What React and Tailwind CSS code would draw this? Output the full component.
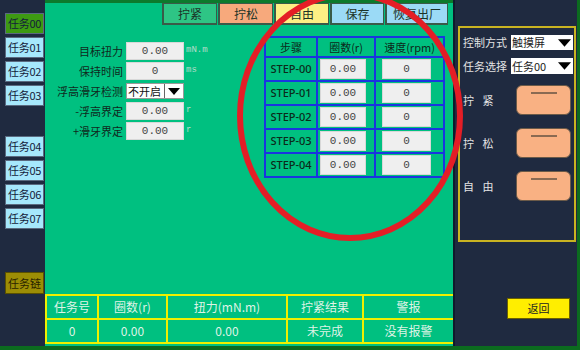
import React from "react";

const tasks1 = ["任务01", "任务02", "任务03"];
const tasks2 = ["任务04", "任务05", "任务06", "任务07"];
const topButtons = [
  { label: "拧紧", cls: "w-[55px] bg-[#2ec585]" },
  { label: "拧松", cls: "w-[55px] bg-[#f7a97c]" },
  { label: "自由", cls: "w-[55px] bg-[#fcef84]" },
  { label: "保存", cls: "w-[54px] bg-[#9bdaf6]" },
  { label: "恢复出厂", cls: "w-[63px] bg-[#9bdaf6]" },
];
const formRows = [
  { label: "目标扭力", value: "0.00", unit: "mN.m" },
  { label: "保持时间", value: "0", unit: "ms" },
  { label: "浮高滑牙检测", select: "不开启" },
  { label: "-浮高界定", value: "0.00", unit: "r" },
  { label: "+滑牙界定", value: "0.00", unit: "r" },
];
const steps = ["STEP-00", "STEP-01", "STEP-02", "STEP-03", "STEP-04"];

function TaskBtn({ label, active }) {
  return (
    <div
      className={`w-[39px] h-[21px] flex items-center justify-center whitespace-nowrap overflow-hidden text-[11px] tracking-[-0.3px] text-[#14213a] border border-[#5a6a80] ${
        active ? "bg-[#3d9a12]" : "bg-[#a6e8fc]"
      }`}
    >
      {label}
    </div>
  );
}

function Arrow() {
  return (
    <span className="w-[19px] h-full flex items-center justify-center border-l border-[#666] bg-white">
      <svg width="12" height="7" viewBox="0 0 12 7">
        <path d="M0 0 L12 0 L6 7 Z" fill="#000" />
      </svg>
    </span>
  );
}

function Field({ value, w = "w-[58px]" }) {
  return (
    <div
      className={`${w} h-[18px] bg-[#efefef] border border-[#d8d8d8] flex items-center justify-center text-[11px] text-[#444] font-['Liberation_Mono',monospace]`}
    >
      {value}
    </div>
  );
}

function OrangeBtn() {
  return (
    <div className="w-[55px] h-[30px] rounded-[6px] bg-[#f9b183] border border-[#6b5a48] flex justify-center pt-[6px]">
      <div className="w-[26px] h-[2px] bg-[#8a6a52]" />
    </div>
  );
}

export default function App() {
  return (
    <div className="relative w-[580px] h-[350px] bg-[#0b6b1f] overflow-hidden font-['Noto_Sans_CJK_SC',sans-serif]">
      <div className="flex h-[346px] pr-[3px]">
        {/* left task list */}
        <aside className="w-[45px] bg-[#1f2a40] flex flex-col pl-[5px] pt-[13px]">
          <TaskBtn label="任务00" active />
          <div className="flex flex-col gap-[3px] mt-[3px]">
            {tasks1.map((t) => (
              <TaskBtn key={t} label={t} />
            ))}
          </div>
          <div className="flex flex-col gap-[3px] mt-[30px]">
            {tasks2.map((t) => (
              <TaskBtn key={t} label={t} />
            ))}
          </div>
          <div className="mt-[43px] w-[39px] h-[22px] flex items-center justify-center whitespace-nowrap bg-[#9c8d05] border border-[#5a5000] text-[11px] text-[#2a2400]">
            任务链
          </div>
        </aside>

        {/* main area */}
        <main className="w-[408px] bg-[#00c080] border-t-[3px] border-[#0c7a2c] flex flex-col">
          <div className="flex justify-end gap-[1px] pr-[5px]">
            {topButtons.map((b) => (
              <div
                key={b.label}
                className={`${b.cls} h-[22px] flex items-center justify-center text-[12px] text-[#1b3327] border border-[#3a5a48] border-b-2 border-l-2`}
              >
                {b.label}
              </div>
            ))}
          </div>

          <div className="flex pl-[5px] mt-[11px]">
            <div className="w-[209px] flex flex-col gap-[2px] pt-[6px]">
              {formRows.map((r) => (
                <div key={r.label} className="flex items-center h-[18px]">
                  <span className="w-[73px] text-right text-[11px] text-[#10281c] whitespace-nowrap">
                    {r.label}
                  </span>
                  <div className="ml-[3px]">
                    {r.select ? (
                      <div className="w-[58px] h-[16px] bg-white border border-[#999] flex items-center text-[11px] text-[#111]">
                        <span className="flex-1 pl-[1px]">{r.select}</span>
                        <Arrow />
                      </div>
                    ) : (
                      <Field value={r.value} />
                    )}
                  </div>
                  <span className="ml-[2px] text-[9px] text-[#b8dccb] font-['Liberation_Mono',monospace]">
                    {r.unit}
                  </span>
                </div>
              ))}
            </div>

            <div className="ml-[5px] grid grid-cols-[52px_58px_69px] grid-rows-[20px_repeat(5,24px)] border-l-2 border-t-2 border-[#1a35e0] text-[11px] text-[#0c2a1a]">
              {["步骤", "圈数(r)", "速度(rpm)"].map((h) => (
                <div
                  key={h}
                  className="border-r-2 border-b-2 border-[#1a35e0] flex items-center justify-center"
                >
                  {h}
                </div>
              ))}
              {steps.map((s) => (
                <React.Fragment key={s}>
                  <div className="border-r-2 border-b-2 border-[#1a35e0] flex items-center justify-center font-['Noto_Sans',sans-serif] font-medium text-[11px]">
                    {s}
                  </div>
                  <div className="border-r-2 border-b-2 border-[#1a35e0] flex items-center pl-[2px]">
                    <Field value="0.00" w="w-[46px] h-[20px]" />
                  </div>
                  <div className="border-r-2 border-b-2 border-[#1a35e0] flex items-center pl-[6px]">
                    <Field value="0" w="w-[49px] h-[20px]" />
                  </div>
                </React.Fragment>
              ))}
            </div>
          </div>

          <div className="mt-auto mb-[2px] grid grid-cols-[52px_69px_120px_76px_91px] grid-rows-[24px_24px] border-t-2 border-l-2 border-[#f0f000] text-[12px] text-[#dff3e6]">
            {["任务号", "圈数(r)", "扭力(mN.m)", "拧紧结果", "警报", "0", "0.00", "0.00", "未完成", "没有报警"].map(
              (c, i) => (
                <div
                  key={i}
                  className="border-r-2 border-b-2 border-[#f0f000] flex items-center justify-center"
                >
                  {c}
                </div>
              )
            )}
          </div>
        </main>

        <div className="w-[2px] bg-[#101a2c]" />

        {/* right control panel */}
        <section className="w-[122px] bg-[#1f2a40] flex flex-col pl-[3px] pr-[1px] pt-[26px]">
          <div className="h-[216px] border-2 border-[#c9b321] flex flex-col pl-[3px] pt-[7px] text-[11px] text-[#e4e4e4]">
            <div className="flex items-center h-[15px]">
              <span className="w-[48px] whitespace-nowrap">控制方式</span>
              <div className="w-[62px] h-[15px] bg-white flex items-center text-[#222]">
                <span className="flex-1 pl-[1px]">触摸屏</span>
                <svg width="13" height="8" viewBox="0 0 12 7" className="mr-[2px]">
                  <path d="M0 0 L12 0 L6 7 Z" fill="#000" />
                </svg>
              </div>
            </div>
            <div className="flex items-center h-[16px] mt-[8px]">
              <span className="w-[48px] whitespace-nowrap">任务选择</span>
              <div className="w-[62px] h-[16px] bg-white flex items-center text-[#222]">
                <span className="flex-1 pl-[1px]">任务00</span>
                <svg width="13" height="8" viewBox="0 0 12 7" className="mr-[2px]">
                  <path d="M0 0 L12 0 L6 7 Z" fill="#000" />
                </svg>
              </div>
            </div>
            {["拧 紧", "拧 松", "自 由"].map((l, i) => (
              <div
                key={l}
                className={`flex items-center ${i === 0 ? "mt-[11px]" : "mt-[13px]"}`}
              >
                <span className="w-[53px] tracking-[3px]">{l}</span>
                <OrangeBtn />
              </div>
            ))}
          </div>
          <div className="mt-[56px] ml-[49px] w-[63px] h-[21px] bg-[#ffee00] border border-[#6a6000] flex items-center justify-center text-[11px] text-[#222]">
            返回
          </div>
        </section>
      </div>

      {/* red annotation ring */}
      <svg
        className="absolute inset-0 pointer-events-none"
        width="580"
        height="350"
        viewBox="0 0 580 350"
      >
        <ellipse cx="350" cy="116" rx="110" ry="122" fill="none" stroke="#e41e26" strokeWidth="6" />
      </svg>
    </div>
  );
}
